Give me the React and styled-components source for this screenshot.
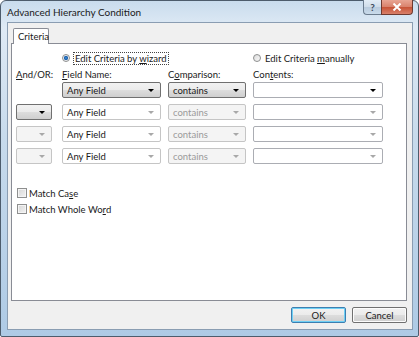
import React from "react";
import styled, { createGlobalStyle, css } from "styled-components";

const GlobalStyle = createGlobalStyle`
  body {
    margin: 0;
    background: #ffffff;
    font-family: Lato, "Open Sans", sans-serif;
  }
`;

const rows = [
  { andOr: false, enabled: true },
  { andOr: true, enabled: false, andOrEnabled: true },
  { andOr: true, enabled: false },
  { andOr: true, enabled: false },
];

const Key = ({ children }) => <u>{children}</u>;

const App = () => {
  return (
    <>
      <GlobalStyle />
      <Window>
        <TitleBar>
          <Title>Advanced Hierarchy Condition</Title>
          <Caption>
            <HelpButton>?</HelpButton>
            <CloseButton>
              <svg width="10" height="8" viewBox="0 0 10 8">
                <path d="M1.5 0.5 L8.5 7.5 M8.5 0.5 L1.5 7.5" stroke="#fff" strokeWidth="2" />
              </svg>
            </CloseButton>
          </Caption>
        </TitleBar>

        <Client>
          <Tabs>
            <Tab>Criteria</Tab>
          </Tabs>
          <Panel>
            <RadioRow>
              <span />
              <RadioLabel>
                <Radio $checked />
                <Focus>
                  Edit Criteria by <Key>w</Key>izard
                </Focus>
              </RadioLabel>
              <span />
              <RadioLabel>
                <Radio />
                <span>
                  Edit Criteria <Key>m</Key>anually
                </span>
              </RadioLabel>
            </RadioRow>

            <LabelRow>
              <Label>
                <Key>A</Key>nd/OR:
              </Label>
              <Label>
                <Key>F</Key>ield Name:
              </Label>
              <Label>
                C<Key>o</Key>mparison:
              </Label>
              <Label>
                Con<Key>t</Key>ents:
              </Label>
            </LabelRow>

            <Rows>
              {rows.map((row, i) => (
                <React.Fragment key={i}>
                  {row.andOr ? (
                    <Select $w={36} $variant={row.andOrEnabled ? "button" : "disabled"}>
                      <Arrow $dim={!row.andOrEnabled} />
                    </Select>
                  ) : (
                    <span />
                  )}
                  <Select $w={99} $variant={row.enabled ? "button" : "plain"}>
                    <Value>Any Field</Value>
                    <Arrow $dim={!row.enabled} />
                  </Select>
                  <Select $w={78} $variant={row.enabled ? "button" : "disabled"}>
                    <Value $dim={!row.enabled}>contains</Value>
                    <Arrow $dim={!row.enabled} />
                  </Select>
                  <Select $w={130} $variant="edit">
                    <Value />
                    <Arrow $dim={!row.enabled} />
                  </Select>
                </React.Fragment>
              ))}
            </Rows>

            <Checks>
              <CheckLabel>
                <Box />
                <span>
                  Match Ca<Key>s</Key>e
                </span>
              </CheckLabel>
              <CheckLabel>
                <Box />
                <span>
                  Match Whole Wo<Key>r</Key>d
                </span>
              </CheckLabel>
            </Checks>
          </Panel>

          <Footer>
            <Button $default>OK</Button>
            <Button>Cancel</Button>
          </Footer>
        </Client>
      </Window>
    </>
  );
};

const Window = styled.div`
  width: 419px;
  height: 337px;
  box-sizing: border-box;
  border: 1px solid #4d5c6c;
  border-radius: 6px 6px 2px 2px;
  background: linear-gradient(180deg, #c9dced 0%, #dfeaf5 8%, #c8dbec 40%, #aecae5 100%);
  padding: 0 5px 6px 6px;
  display: flex;
  flex-direction: column;
`;

const TitleBar = styled.div`
  height: 21px;
  display: flex;
  justify-content: space-between;
  align-items: flex-start;
`;

const Title = styled.div`
  margin: 5px 0 0 0;
  font-size: 10px;
  color: #1a1a1a;
`;

const Caption = styled.div`
  display: flex;
  margin-top: -1px;
`;

const capButton = css`
  height: 15px;
  box-sizing: border-box;
  display: flex;
  align-items: center;
  justify-content: center;
  border: 1px solid #6b7c8e;
  border-top: none;
`;

const HelpButton = styled.div`
  ${capButton};
  width: 18px;
  border-right: none;
  border-radius: 0 0 0 4px;
  background: linear-gradient(180deg, #e3edf6 0%, #cfdce9 50%, #b9cbdd 51%, #c9dbeb 100%);
  color: #3c4b5c;
  font-size: 10px;
  font-weight: bold;
`;

const CloseButton = styled.div`
  ${capButton};
  width: 32px;
  border-radius: 0 0 4px 0;
  border-color: #6e3a30;
  background: linear-gradient(180deg, #e8a593 0%, #d9826c 48%, #c75336 52%, #d8806a 100%);
`;

const Client = styled.div`
  flex: 1;
  background: #f0f0f0;
  border: 1px solid #8a9db2;
  padding: 5px 5px 0 3px;
  display: flex;
  flex-direction: column;
`;

const Tabs = styled.div`
  display: flex;
  padding-left: 2px;
  position: relative;
  z-index: 1;
`;

const Tab = styled.div`
  width: 36px;
  height: 16px;
  box-sizing: border-box;
  border: 1px solid #898c95;
  border-bottom: none;
  border-radius: 2px 2px 0 0;
  background: #ffffff;
  font-size: 9.5px;
  color: #1a1a1a;
  padding: 2px 0 0 4px;
  margin-bottom: -1px;
`;

const Panel = styled.div`
  height: 258px;
  box-sizing: border-box;
  background: #ffffff;
  border: 1px solid #898c95;
  padding: 8px 0 0 4px;
`;

const columns = css`
  display: grid;
  grid-template-columns: 46px 106px 85px 130px;
  align-items: center;
`;

const RadioRow = styled.div`
  ${columns};
  height: 12px;
`;

const LabelRow = styled.div`
  ${columns};
  height: 12px;
  margin-top: 4px;
`;

const Rows = styled.div`
  ${columns};
  grid-auto-rows: 16px;
  row-gap: 6px;
  margin-top: 2px;
`;

const RadioLabel = styled.label`
  display: flex;
  align-items: center;
  gap: 4px;
  font-size: 9.5px;
  color: #1a1a1a;
  white-space: nowrap;
`;

const Radio = styled.span`
  width: 8px;
  height: 8px;
  box-sizing: border-box;
  border-radius: 50%;
  border: 1px solid #8e8f8f;
  background: ${(p) =>
    p.$checked
      ? "radial-gradient(circle, #3b8dd8 0%, #1d5ea8 45%, #e8ecf0 55%, #f4f4f4 100%)"
      : "linear-gradient(135deg, #dcdcdc, #f8f8f8)"};
`;

const Focus = styled.span`
  outline: 1px dotted #444;
  padding: 0 1px;
`;

const Label = styled.div`
  font-size: 9.5px;
  color: #1a1a1a;
`;

const variants = {
  button: css`
    border-color: #707070;
    background: linear-gradient(180deg, #f2f2f2 0%, #ebebeb 50%, #dddddd 51%, #cfcfcf 100%);
  `,
  plain: css`
    border-color: #c5c5c5;
    background: #ffffff;
  `,
  disabled: css`
    border-color: #c5c5c5;
    background: #f4f4f4;
  `,
  edit: css`
    border-color: #abadb3;
    background: #ffffff;
  `,
};

const Select = styled.div`
  width: ${(p) => p.$w}px;
  height: 16px;
  box-sizing: border-box;
  border: 1px solid;
  border-radius: 2px;
  display: flex;
  align-items: center;
  padding: 0 6px 0 4px;
  ${(p) => variants[p.$variant]};
`;

const Value = styled.span`
  flex: 1;
  font-size: 9.5px;
  color: ${(p) => (p.$dim ? "#9a9a9a" : "#1a1a1a")};
`;

const Arrow = styled.span`
  margin-left: auto;
  width: 0;
  height: 0;
  border-left: 3px solid transparent;
  border-right: 3px solid transparent;
  border-top: 3px solid ${(p) => (p.$dim ? "#a8a8a8" : "#000000")};
`;

const Checks = styled.div`
  display: flex;
  flex-direction: column;
  gap: 6px;
  margin-top: 24px;
  padding-left: 1px;
`;

const CheckLabel = styled.label`
  display: flex;
  align-items: center;
  gap: 2px;
  font-size: 9.5px;
  color: #1a1a1a;
  height: 10px;
`;

const Box = styled.span`
  width: 10px;
  height: 10px;
  box-sizing: border-box;
  border: 1px solid #8e8f8f;
  background: linear-gradient(135deg, #d6d6d6 0%, #f3f3f3 100%);
  box-shadow: inset 0 0 0 1px #f4f4f4;
`;

const Footer = styled.div`
  display: flex;
  justify-content: flex-end;
  gap: 6px;
  padding-top: 6px;
`;

const Button = styled.div`
  width: 55px;
  height: 16px;
  box-sizing: border-box;
  border: 1px solid ${(p) => (p.$default ? "#3c7fb1" : "#707070")};
  border-radius: 2px;
  display: flex;
  align-items: center;
  justify-content: center;
  font-size: 9.5px;
  color: #1a1a1a;
  background: linear-gradient(180deg, #f2f2f2 0%, #ebebeb 50%, #dddddd 51%, #cfcfcf 100%);
  box-shadow: ${(p) => (p.$default ? "inset 0 0 0 1px #6fd0f5" : "inset 0 0 0 1px #fcfcfc")};
`;

export default App;
